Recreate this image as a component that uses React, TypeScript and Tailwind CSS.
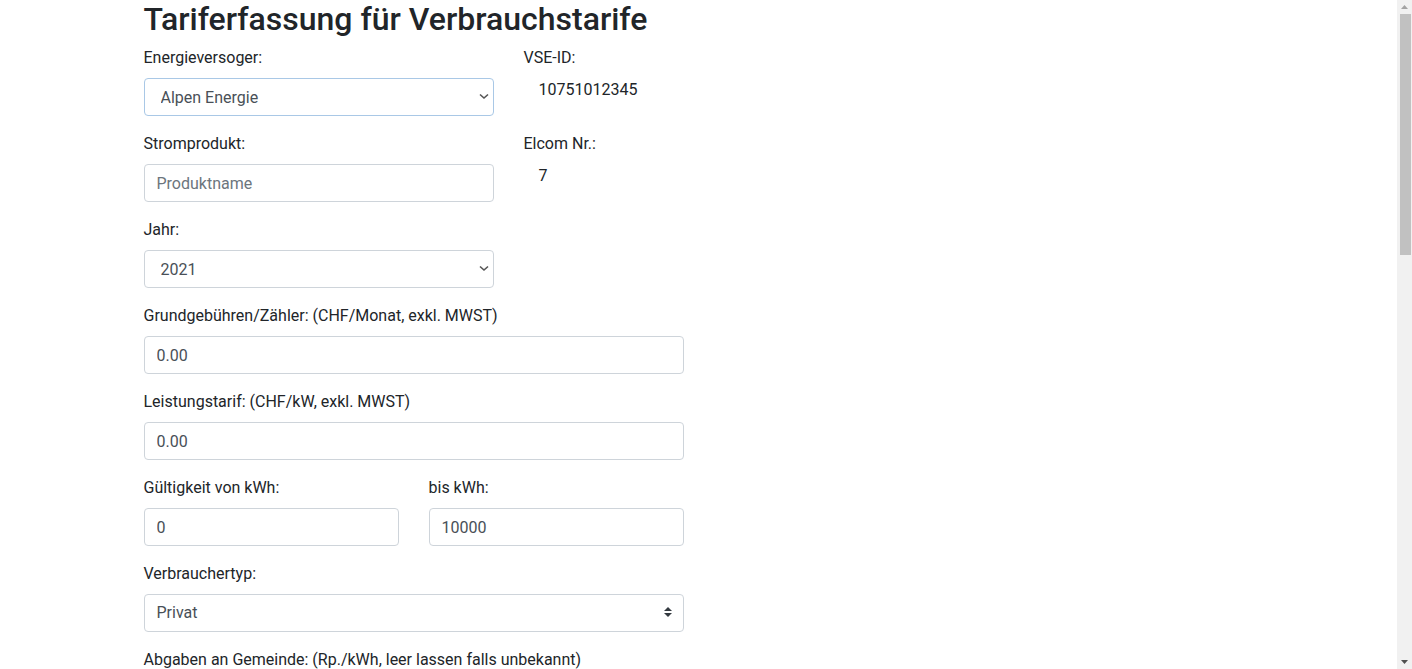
import React from "react";

const labelCls = "block text-[16px] leading-[24px] text-[#212529] mb-2";
const inputCls =
  "block w-full h-[38px] px-[12px] py-[6px] text-[16px] leading-[24px] text-[#495057] bg-white border border-[#ced4da] rounded-[4px] outline-none placeholder:text-[#6c757d]";

function NativeSelect({ value, options, blue }: { value: string; options: string[]; blue?: boolean }) {
  return (
    <div className="relative">
      <select
        defaultValue={value}
        className={
          "block w-full h-[38px] pl-[16px] pr-[28px] pt-[2px] text-[16px] leading-[24px] text-[#495057] bg-white border rounded-[4px] outline-none appearance-none " +
          (blue ? "border-[#a9c8e6]" : "border-[#ced4da]")
        }
      >
        {options.map((o) => (
          <option key={o}>{o}</option>
        ))}
      </select>
      <svg
        className="absolute right-[5px] top-[15px] pointer-events-none"
        width="10"
        height="7"
        viewBox="0 0 10 7"
      >
        <path d="M1 1.5 L5 5 L9 1.5" fill="none" stroke="#555" strokeWidth="1.6" />
      </svg>
    </div>
  );
}

function Field({ label, value, placeholder }: { label: string; value?: string; placeholder?: string }) {
  return (
    <div className="mb-4">
      <label className={labelCls}>{label}</label>
      <input className={inputCls} defaultValue={value} placeholder={placeholder} />
    </div>
  );
}

function Scrollbar() {
  return (
    <div className="w-[15px] shrink-0 h-full bg-[#f1f1f1] flex flex-col items-center">
      <div className="h-[14px] w-full flex items-center justify-center">
        <svg width="7" height="4" viewBox="0 0 7 4">
          <path d="M3.5 0 L7 4 L0 4 Z" fill="#a3a3a3" />
        </svg>
      </div>
      <div className="h-[241px] w-[11px] ml-[1px] bg-[#c1c1c1]" />
      <div className="flex-1" />
      <div className="h-[14px] w-full flex items-center justify-center">
        <svg width="7" height="4" viewBox="0 0 7 4">
          <path d="M0 0 L7 0 L3.5 4 Z" fill="#505050" />
        </svg>
      </div>
    </div>
  );
}

export default function App() {
  return (
    <div
      className="h-[669px] flex overflow-hidden bg-white"
      style={{ fontFamily: 'Roboto, "Liberation Sans", Arial, sans-serif' }}
    >
      <div className="flex-1 min-w-0 overflow-hidden">
        <div className="w-[1140px] mx-auto px-[15px]">
          <h2 className="text-[32px] leading-[1.2] font-medium text-[#212529] mb-2">
            Tariferfassung für Verbrauchstarife
          </h2>

          <div className="flex gap-[30px]">
            <div className="w-[350px] mb-4">
              <label className={labelCls}>Energieversoger:</label>
              <NativeSelect value="Alpen Energie" options={["Alpen Energie"]} blue />
            </div>
            <div className="w-[160px]">
              <label className="block text-[16px] leading-[24px] text-[#212529]">VSE-ID:</label>
              <div className="mt-[8px] pl-[15px] text-[16px] leading-[24px] text-[#212529]">10751012345</div>
            </div>
          </div>

          <div className="flex gap-[30px]">
            <div className="w-[350px] mb-4">
              <label className={labelCls}>Stromprodukt:</label>
              <input className={inputCls} placeholder="Produktname" />
            </div>
            <div className="w-[160px]">
              <label className="block text-[16px] leading-[24px] text-[#212529]">Elcom Nr.:</label>
              <div className="mt-[8px] pl-[15px] text-[16px] leading-[24px] text-[#212529]">7</div>
            </div>
          </div>

          <div className="w-[350px] mb-4">
            <label className={labelCls}>Jahr:</label>
            <NativeSelect value="2021" options={["2021"]} />
          </div>

          <div className="w-[540px]">
            <Field label="Grundgebühren/Zähler: (CHF/Monat, exkl. MWST)" value="0.00" />
            <Field label="Leistungstarif: (CHF/kW, exkl. MWST)" value="0.00" />

            <div className="flex gap-[30px]">
              <div className="w-[255px]">
                <Field label="Gültigkeit von kWh:" value="0" />
              </div>
              <div className="w-[255px]">
                <Field label="bis kWh:" value="10000" />
              </div>
            </div>

            <div className="mb-4">
              <label className={labelCls}>Verbrauchertyp:</label>
              <div className="relative">
                <select
                  defaultValue="Privat"
                  className="block w-full h-[38px] pl-[12px] pr-[28px] text-[16px] leading-[24px] text-[#495057] bg-white border border-[#ced4da] rounded-[4px] outline-none appearance-none"
                >
                  <option>Privat</option>
                  <option>Gewerbe</option>
                </select>
                <svg
                  className="absolute right-[12px] top-[13px] pointer-events-none"
                  width="8"
                  height="10"
                  viewBox="0 0 4 5"
                >
                  <path fill="#343a40" d="M2 0L0 2h4zm0 5L0 3h4z" />
                </svg>
              </div>
            </div>

            <div className="h-[24px] text-[16px] leading-[24px] text-[#212529] whitespace-nowrap">
              Abgaben an Gemeinde: (Rp./kWh, leer lassen falls unbekannt)
            </div>
          </div>
        </div>
      </div>
      <Scrollbar />
    </div>
  );
}
